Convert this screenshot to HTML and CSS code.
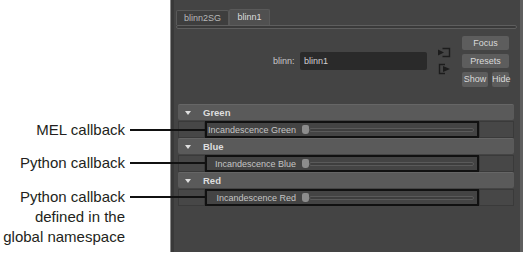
FILE: index.html
```html
<!DOCTYPE html>
<html lang="en">
<head>
  <meta charset="UTF-8" />
  <title>Attribute editor callbacks</title>
  <link rel="stylesheet" href="styles.css">
</head>
<body>

<!-- callouts on the left -->
<div class="notes">
  <div class="note note-mel">MEL callback</div>
  <div class="note note-py">Python callback</div>
  <div class="note note-global">Python callback<br>defined in the<br>global namespace</div>
</div>

<!-- attribute editor panel -->
<div class="panel">
  <div class="tabs">
    <div class="tab tab-sg">blinn2SG</div>
    <div class="tab tab-active">blinn1</div>
  </div>
  <div class="tab-rule"></div>

  <div class="attr-top">
    <div class="name-group">
      <span class="name-label">blinn:</span>
      <div class="name-field">blinn1</div>
    </div>
    <div class="io-icons">
      <svg class="io-icon" width="14" height="11" viewBox="0 0 14 11">
        <path d="M5.5 1.5 H12.5 V9.5 H5.5" fill="none" stroke="#1c1c1c" stroke-width="1.4"/>
        <path d="M1 2.5 L7 5.5 L1 8.5 Z" fill="#1c1c1c"/>
      </svg>
      <svg class="io-icon" width="14" height="12" viewBox="0 0 14 12">
        <path d="M8 1.5 H2.5 V10.5 H8" fill="none" stroke="#1c1c1c" stroke-width="1.4"/>
        <path d="M6 3 L13 6 L6 9 Z" fill="#1c1c1c"/>
      </svg>
    </div>
    <div class="buttons">
      <div class="btn btn-wide">Focus</div>
      <div class="btn btn-wide">Presets</div>
      <div class="btn-row">
        <div class="btn btn-show">Show</div>
        <div class="btn btn-hide">Hide</div>
      </div>
    </div>
  </div>

  <div class="frames">
    <div class="frame-head"><span class="arrow"></span>Green</div>
    <div class="frame-row">
      <div class="cell-l"></div>
      <div class="box">
        <span class="slider-label">Incandescence Green</span>
        <span class="thumb"></span>
        <span class="groove"></span>
      </div>
      <div class="cell-r"></div>
    </div>

    <div class="frame-head"><span class="arrow"></span>Blue</div>
    <div class="frame-row">
      <div class="cell-l"></div>
      <div class="box">
        <span class="slider-label">Incandescence Blue</span>
        <span class="thumb"></span>
        <span class="groove"></span>
      </div>
      <div class="cell-r"></div>
    </div>

    <div class="frame-head"><span class="arrow"></span>Red</div>
    <div class="frame-row">
      <div class="cell-l"></div>
      <div class="box">
        <span class="slider-label">Incandescence Red</span>
        <span class="thumb"></span>
        <span class="groove"></span>
      </div>
      <div class="cell-r"></div>
    </div>
  </div>
</div>

</body>
</html>
```

FILE: styles.css
```css
* { box-sizing: border-box; }
body {
  margin: 0;
  background: #fff;
  display: flex;
  height: 255px;
  overflow: hidden;
  font-family: 'Liberation Sans', Arial, sans-serif;
}

/* callouts */
.notes {
  width: 170px;
  padding-top: 120px;
}
.note {
  position: relative;
  padding-right: 45px;
  text-align: right;
  font-size: 15px;
  line-height: 20px;
  color: #231f20;
}
.note::after {
  content: '';
  position: absolute;
  left: 130px;
  top: 9px;
  width: 76px;
  height: 2px;
  background: #111;
  z-index: 2;
}
.note-py { margin-top: 13px; }
.note-global { margin-top: 14px; }

/* panel */
.panel {
  width: 353px;
  height: 252px;
  background: #444;
  border-left: 1px solid #8a8a8a;
  border-right: 3px solid #5e5e5e;
  box-shadow: inset 3px 0 0 #393939;
  padding-left: 5px;
  font-size: 9px;
  color: #c8c8c8;
}
.tabs {
  display: flex;
  align-items: flex-end;
  height: 16px;
  margin-top: 9px;
}
.tab {
  height: 15px;
  line-height: 14px;
  text-align: center;
  background: #3e3e3e;
  border: 1px solid #595959;
  border-bottom: none;
  border-radius: 2px 2px 0 0;
  color: #b8b8b8;
}
.tab-sg { width: 53px; }
.tab-active {
  width: 41px;
  height: 16px;
  background: #505050;
  color: #dcdcdc;
}
.tab-rule {
  width: 341px;
  height: 4px;
  border: 1px solid #5e5e5e;
  border-radius: 2px;
  background: #3a3a3a;
}

.attr-top {
  display: flex;
  align-items: flex-start;
  padding-top: 7px;
}
.name-group {
  display: flex;
  align-items: center;
  gap: 4px;
  margin: 16px 0 0 97px;
  height: 18px;
}
.name-label { width: 23px; color: #c8c8c8; }
.name-field {
  width: 127px;
  height: 18px;
  line-height: 18px;
  padding-left: 4px;
  background: #2a2a2a;
  border-radius: 2px;
  color: #d0d0d0;
}
.io-icons {
  display: flex;
  flex-direction: column;
  gap: 5px;
  margin: 11px 0 0 10px;
}
.io-icon { display: block; }
.buttons {
  display: flex;
  flex-direction: column;
  gap: 4px;
  margin-left: auto;
  margin-right: 11px;
  width: 47px;
}
.btn {
  height: 14px;
  line-height: 14px;
  text-align: center;
  background: #5d5d5d;
  border-radius: 2px;
  color: #dadada;
}
.btn-row {
  display: flex;
  gap: 4px;
}
.btn-show { width: 26px; height: 15px; }
.btn-hide { width: 17px; height: 15px; }

/* frames */
.frames {
  width: 336px;
  margin: 17px 0 0 2px;
}
.frame-head {
  display: flex;
  align-items: center;
  height: 16px;
  background: #5a5a5a;
  border-top: 1px solid #666;
  border-radius: 2px;
  font-weight: bold;
  font-size: 9.5px;
  color: #dedede;
}
.arrow {
  width: 0;
  height: 0;
  margin: 0 12px 0 7px;
  border-left: 3.5px solid transparent;
  border-right: 3.5px solid transparent;
  border-top: 4px solid #e0e0e0;
}
.frame-row {
  display: flex;
  height: 17px;
  margin-top: 1px;
}
.cell-l, .cell-r {
  background: #474747;
  border: 1px solid #3a3a3a;
}
.cell-l { width: 27px; }
.cell-r { width: 35px; }
.box {
  display: flex;
  align-items: center;
  width: 274px;
  border: 2px solid #111;
  background: #444;
}
.slider-label {
  width: 89px;
  text-align: right;
  color: #c4c4c4;
}
.thumb {
  width: 7px;
  height: 9px;
  margin-left: 6px;
  background: #8c8c8c;
  border-radius: 2px 2px 3px 3px;
}
.groove {
  flex: 1;
  height: 4px;
  margin-right: 3px;
  border: 1px solid #5a5a5a;
  border-radius: 2px;
  background: #3e3e3e;
}
```
